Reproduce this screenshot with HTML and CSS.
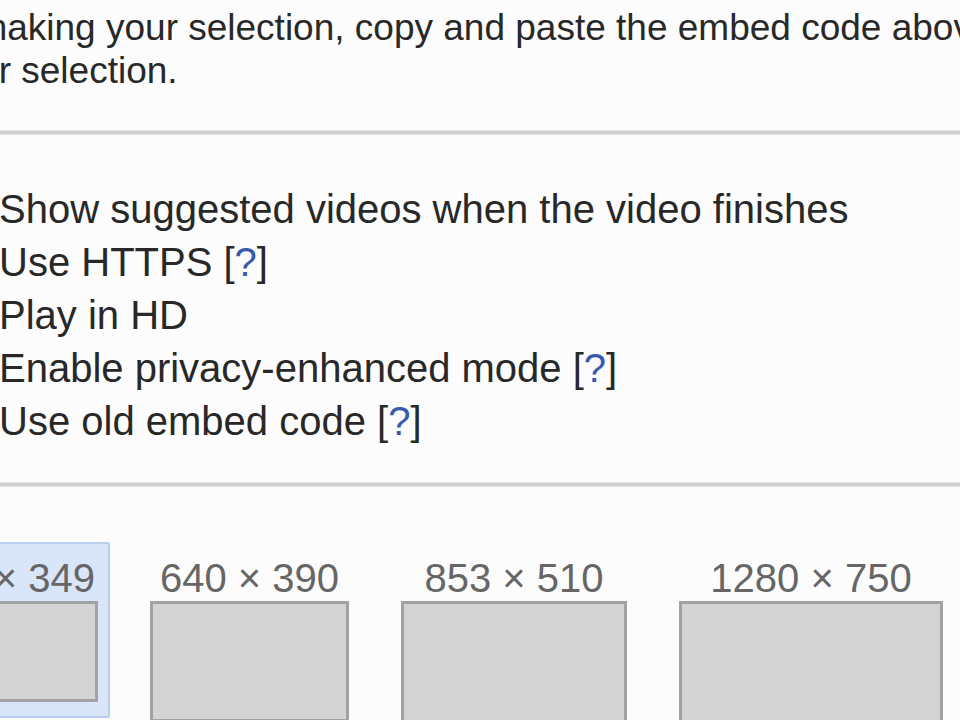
FILE: index.html
```html
<!DOCTYPE html>
<html lang="en">
<head>
<meta charset="utf-8">
<title>Embed options</title>
<link rel="stylesheet" href="styles.css">
</head>
<body>
<div class="page">
  <p class="intro">
    <span class="line line-first">After making your selection, copy and paste the embed code above. The code changes based on</span>
    <span class="line line-second">your selection.</span>
  </p>

  <hr class="rule">

  <ul class="options">
    <li>Show suggested videos when the video finishes</li>
    <li>Use HTTPS <span class="help">[<a href="#">?</a>]</span></li>
    <li>Play in HD</li>
    <li>Enable privacy-enhanced mode <span class="help">[<a href="#">?</a>]</span></li>
    <li>Use old embed code <span class="help">[<a href="#">?</a>]</span></li>
  </ul>

  <hr class="rule rule-lower">

  <ul class="sizes">
    <li class="size is-selected">
      <span class="size-label">560 × 349</span>
      <span class="size-box box-560"></span>
    </li>
    <li class="size">
      <span class="size-label">640 × 390</span>
      <span class="size-box box-640"></span>
    </li>
    <li class="size">
      <span class="size-label">853 × 510</span>
      <span class="size-box box-853"></span>
    </li>
    <li class="size">
      <span class="size-label">1280 × 750</span>
      <span class="size-box box-1280"></span>
    </li>
  </ul>
</div>
</body>
</html>
```

FILE: styles.css
```css
html, body {
  margin: 0;
  padding: 0;
}

body {
  width: 960px;
  height: 720px;
  overflow: hidden;
  background: #fcfcfc;
  color: #282828;
  font-family: "Liberation Sans", Arial, sans-serif;
  font-size: 40px;
}

.page {
  padding-top: 6px;
}

.intro {
  margin: 0;
  font-size: 37px;
  line-height: 43px;
}

.intro .line {
  display: block;
  white-space: nowrap;
}

.intro .line-first {
  margin-left: -112px;
}

.intro .line-second {
  margin-left: -61px;
}

/* Section separators */
.rule {
  border: 0;
  height: 3px;
  margin: 39px 0 0;
  background: #cecece;
  box-shadow: 0 -1px 0 #e6e6e6, 0 1px 0 #e6e6e6;
}

.rule-lower {
  margin-top: 35px;
}

/* Player options */
.options {
  list-style: none;
  margin: 49px 0 0 -1px;
  padding: 0;
  line-height: 53px;
  white-space: nowrap;
}

.help a {
  color: #3658ad;
  text-decoration: none;
}

/* Player size picker */
.sizes {
  list-style: none;
  display: flex;
  align-items: flex-start;
  gap: 28px;
  margin: 56px 0 0 -99px;
  padding: 0;
}

.size {
  flex: none;
  display: flex;
  flex-direction: column;
  align-items: center;
  padding: 14px 10px;
  border: 2px solid transparent;
  border-radius: 2px;
}

.size.is-selected {
  background: #d9e5f8;
  border-color: #b9cdee;
}

.size-label {
  display: block;
  line-height: 40px;
  margin-bottom: 3px;
  color: #666666;
  white-space: nowrap;
}

.size-box {
  display: block;
  box-sizing: border-box;
  border: 3px solid #a2a2a2;
  background: #d4d4d4;
}

.box-560 { width: 185px; height: 101px; }
.box-640 { width: 199px; height: 121px; }
.box-853 { width: 226px; height: 135px; }
.box-1280 { width: 264px; height: 155px; }
```
